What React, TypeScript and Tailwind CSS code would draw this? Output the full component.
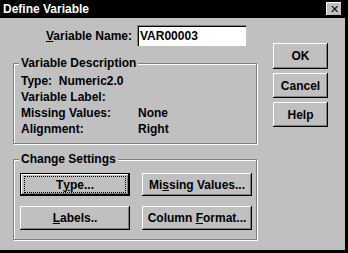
const btn =
  "flex items-center justify-center bg-[#c0c0c0] shadow-[inset_-1px_-1px_#000,inset_1px_1px_#fff,inset_-2px_-2px_#808080] text-black";

function Button({
  children,
  className = "",
}: {
  children: React.ReactNode;
  className?: string;
}) {
  return <div className={`${btn} ${className}`}>{children}</div>;
}

function Group({
  title,
  className = "",
  children,
}: {
  title: string;
  className?: string;
  children: React.ReactNode;
}) {
  return (
    <div
      className={`relative border border-[#808080] shadow-[1px_1px_#fff,inset_1px_1px_#fff] ${className}`}
    >
      <span className="absolute -top-[8px] left-[5px] bg-[#c0c0c0] px-[2px] leading-[14px]">
        {title}
      </span>
      {children}
    </div>
  );
}

export default function App() {
  return (
    <div
      className="h-[253px] w-[348px] bg-[#c0c0c0] text-[12px] font-bold text-black"
      style={{ fontFamily: '"Liberation Sans", Arial, sans-serif' }}
    >
      <div className="flex h-full flex-col border-b-[3px] border-r-[3px] border-b-[#000] border-r-[#000]">
        <div className="flex h-[18px] items-center justify-between bg-black pl-[3px] pr-[3px] text-white">
          <span className="leading-none">Define Variable</span>
          <div className="flex h-[14px] w-[16px] items-center justify-center bg-[#c0c0c0] text-[11px] font-normal text-black shadow-[inset_-1px_-1px_#000,inset_1px_1px_#fff]">
            ✕
          </div>
        </div>

        <div className="flex flex-1 gap-[16px] pl-[13px] pt-[7px]">
          <div className="flex w-[244px] flex-col">
            <div className="flex items-center justify-end gap-[5px] pr-[11px]">
              <span>
                <span className="underline">V</span>ariable Name:
              </span>
              <div className="flex h-[21px] w-[109px] items-center bg-white pl-[3px] shadow-[inset_1px_1px_#808080,inset_2px_2px_#000]">
                VAR00003
              </div>
            </div>

            <Group title="Variable Description" className="mt-[17px] h-[81px]">
              <div className="grid grid-cols-[117px_1fr] gap-y-[2px] pl-[7px] pt-[10px] leading-[14px]">
                <span>
                  Type:&nbsp; Numeric2.0
                </span>
                <span />
                <span>Variable Label:</span>
                <span />
                <span>Missing Values:</span>
                <span>None</span>
                <span>Alignment:</span>
                <span>Right</span>
              </div>
            </Group>

            <Group title="Change Settings" className="mt-[15px] h-[81px]">
              <div className="grid grid-cols-[110px_110px] gap-x-[12px] gap-y-[10px] pl-[6px] pt-[13px]">
                <div className="h-[23px] border border-black">
                  <Button className="h-full">
                    <span className="flex h-[15px] w-[100px] items-center justify-center outline-1 outline-dotted outline-black">
                      T<span className="underline">y</span>pe...
                    </span>
                  </Button>
                </div>
                <Button className="h-[23px]">
                  Mi<span className="underline">s</span>sing Values...
                </Button>
                <Button className="h-[24px]">
                  <span className="underline">L</span>abels..
                </Button>
                <Button className="h-[24px]">
                  Column&nbsp;<span className="underline">F</span>ormat...
                </Button>
              </div>
            </Group>
          </div>

          <div className="flex w-[55px] flex-col gap-[4px] pt-[18px]">
            <Button className="h-[26px]">OK</Button>
            <Button className="h-[25px]">Cancel</Button>
            <Button className="h-[25px]">Help</Button>
          </div>
        </div>
      </div>
    </div>
  );
}
